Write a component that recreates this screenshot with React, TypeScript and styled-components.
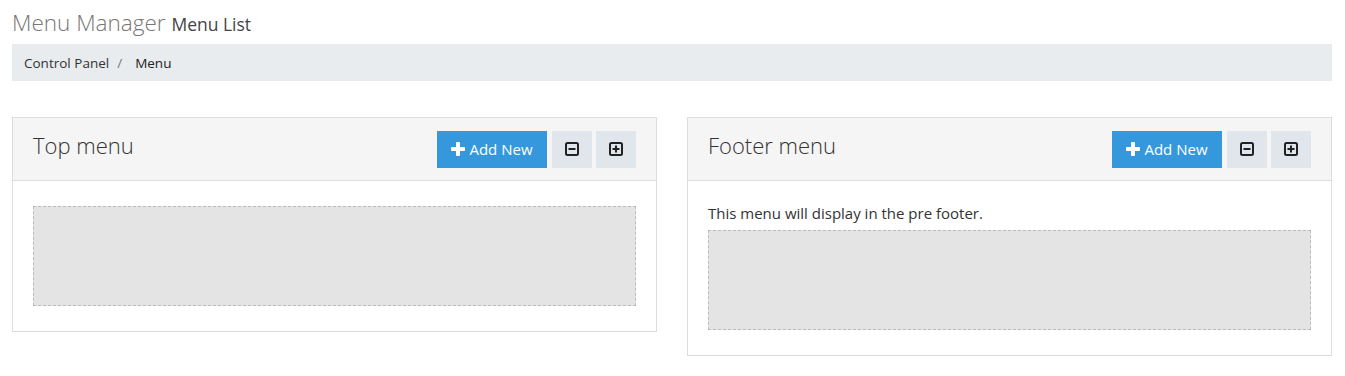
import React from "react";
import styled, { createGlobalStyle } from "styled-components";

const GlobalStyle = createGlobalStyle`
  * { box-sizing: border-box; }
  body {
    margin: 0;
    background: #fff;
    font-family: "Open Sans", "Noto Sans", sans-serif;
    color: #333;
  }
`;

const MinusSquare = () => (
  <svg width="14" height="14" viewBox="0 0 14 14">
    <rect x="1" y="1" width="12" height="12" rx="1.5" fill="none" stroke="#222" strokeWidth="2" />
    <rect x="3.5" y="6" width="7" height="2" fill="#222" />
  </svg>
);

const PlusSquare = () => (
  <svg width="14" height="14" viewBox="0 0 14 14">
    <rect x="1" y="1" width="12" height="12" rx="1.5" fill="none" stroke="#222" strokeWidth="2" />
    <rect x="3.5" y="6" width="7" height="2" fill="#222" />
    <rect x="6" y="3.5" width="2" height="7" fill="#222" />
  </svg>
);

const PlusIcon = () => (
  <svg width="14" height="14" viewBox="0 0 14 14">
    <rect x="0" y="5" width="14" height="4" rx="0.8" fill="#fff" />
    <rect x="5" y="0" width="4" height="14" rx="0.8" fill="#fff" />
  </svg>
);

type PanelProps = {
  title: string;
  note?: string;
};

const Panel: React.FC<PanelProps> = ({ title, note }) => (
  <Card>
    <CardHead>
      <CardTitle>{title}</CardTitle>
      <Actions>
        <AddButton>
          <PlusIcon />
          Add New
        </AddButton>
        <ToolButton>
          <MinusSquare />
        </ToolButton>
        <ToolButton>
          <PlusSquare />
        </ToolButton>
      </Actions>
    </CardHead>
    <CardBody $withNote={!!note}>
      {note && <Note>{note}</Note>}
      <DropZone />
    </CardBody>
  </Card>
);

const App: React.FC = () => {
  return (
    <Page>
      <GlobalStyle />
      <PageTitle>
        Menu Manager <small>Menu List</small>
      </PageTitle>
      <Breadcrumb>
        <Crumb>Control Panel</Crumb>
        <Sep>/</Sep>
        <Crumb $active>Menu</Crumb>
      </Breadcrumb>
      <Columns>
        <Panel title="Top menu" />
        <Panel title="Footer menu" note="This menu will display in the pre footer." />
      </Columns>
    </Page>
  );
};

export default App;

const Page = styled.div`
  padding: 0 13px 0 12px;
`;

const PageTitle = styled.h1`
  margin: 0;
  padding-top: 9px;
  height: 44px;
  font-size: 22.5px;
  font-weight: 300;
  color: #777;
  line-height: 28px;

  small {
    font-size: 17.5px;
    font-weight: 400;
    color: #444;
  }
`;

const Breadcrumb = styled.div`
  height: 37px;
  background: #e9ecef;
  display: flex;
  align-items: center;
  padding: 0 12px;
  font-size: 13.5px;
`;

const Crumb = styled.span<{ $active?: boolean }>`
  color: ${(p) => (p.$active ? "#222" : "#333")};
`;

const Sep = styled.span`
  color: #777;
  padding: 0 13px 0 8px;
`;

const Columns = styled.div`
  display: grid;
  grid-template-columns: 1fr 1fr;
  column-gap: 30px;
  align-items: start;
  margin-top: 36px;
`;

const Card = styled.div`
  border: 1px solid #ddd;
  background: #fff;
`;

const CardHead = styled.div`
  height: 63px;
  background: #f5f5f5;
  border-bottom: 1px solid #ddd;
  display: flex;
  align-items: center;
  justify-content: space-between;
  padding: 0 20px;
`;

const CardTitle = styled.h3`
  margin: 0 0 8px;
  font-size: 22px;
  font-weight: 300;
  color: #333;
`;

const Actions = styled.div`
  display: flex;
  gap: 4px;
`;

const AddButton = styled.button`
  height: 37px;
  width: 110px;
  border: none;
  background: #3598dc;
  color: #fff;
  font-family: inherit;
  font-size: 15px;
  display: flex;
  align-items: center;
  justify-content: center;
  gap: 4px;
  margin-right: 1px;
  cursor: pointer;
`;

const ToolButton = styled.button`
  height: 37px;
  width: 40px;
  border: none;
  background: #e1e5ec;
  display: flex;
  align-items: center;
  justify-content: center;
  cursor: pointer;
`;

const CardBody = styled.div<{ $withNote: boolean }>`
  padding: ${(p) => (p.$withNote ? "22px" : "25px")} 20px 25px;
`;

const Note = styled.p`
  margin: 0 0 7px;
  font-size: 15px;
  line-height: 20px;
  color: #333;
`;

const DropZone = styled.div`
  height: 100px;
  background: #e4e4e4;
  border: 1px dashed #bbb;
`;
